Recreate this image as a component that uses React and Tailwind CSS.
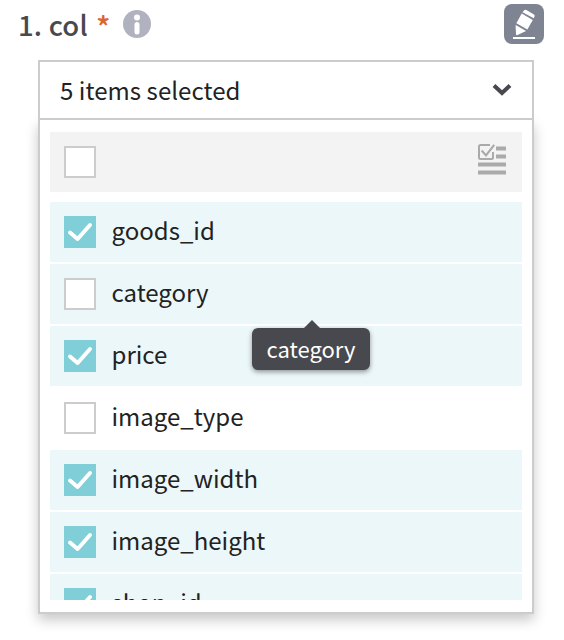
const columns = [
  { name: "goods_id", checked: true, tinted: true },
  { name: "category", checked: false, tinted: true },
  { name: "price", checked: true, tinted: true },
  { name: "image_type", checked: false, tinted: false },
  { name: "image_width", checked: true, tinted: true },
  { name: "image_height", checked: true, tinted: true },
  { name: "shop_id", checked: true, tinted: true },
];

function Checkbox({ checked }) {
  if (!checked) {
    return <span className="size-8 shrink-0 border-2 border-[#cccccc] bg-white" />;
  }
  return (
    <span className="size-8 shrink-0 bg-[#7fced8]">
      <svg viewBox="0 0 32 32" className="size-8" fill="none" stroke="white" strokeWidth="4" strokeLinecap="round" strokeLinejoin="round">
        <path d="M6 16.500 13.600 23 26 9" />
      </svg>
    </span>
  );
}

function InfoIcon() {
  return (
    <svg viewBox="0 0 28 28" className="ml-[13px] mt-[10px] size-7">
      <circle cx="14" cy="14" r="14" fill="#b0b2bf" />
      <circle cx="14" cy="7.4" r="3" fill="white" />
      <rect x="11.5" y="12" width="5" height="12.4" rx="2.5" fill="white" />
    </svg>
  );
}

function EditIcon() {
  return (
    <svg viewBox="0 0 40 40" className="size-10">
      <g fill="white">
        <path d="M20 6.6Q20.900 5.400 22.300 6.100L30 10.500Q31.100 11.300 30.500 12.600L29.800 14.300 18.500 8.200Z" />
        <path d="M17.700 9.500 28.800 15.900 23.400 25.400 12.400 19.200Z" />
        <path d="M11.600 20.900 22.100 27 13 31.200Q12.200 31.300 12 30.300Z" />
        <rect x="9" y="33" width="22" height="2" />
      </g>
    </svg>
  );
}

function ChecklistIcon() {
  return (
    <svg viewBox="0 0 28 32" className="h-8 w-7" fill="none" stroke="#aaaaaa">
      <path d="M12 2H2.500Q1 2 1 3.500V14.500Q1 16 2.500 16H13.500Q15 16 15 14.500V9" strokeWidth="2" />
      <path d="M3.600 7.600 8 12.400 16.200 1.800" strokeWidth="2.2" />
      <path d="M18 5.500H28M18 13.500H28M0 21.500H28M0 29.500H28" strokeWidth="4" />
    </svg>
  );
}

export default function App() {
  return (
    <div className="h-[640px] w-[564px] overflow-hidden bg-white font-['Noto_Sans_CJK_SC',sans-serif] text-[24px] text-[#222222]">
      <header className="flex h-[60px] items-start pl-[18px] pr-5">
        <span className="mt-[6px] w-[71px] whitespace-nowrap text-[27.5px] leading-9 font-medium tracking-[0.2px] text-[#48494e]">1. col</span>
        <span className="ml-[7px] mt-[8px] w-[14px] text-[30px] leading-9 font-medium text-[#dc6430]">*</span>
        <InfoIcon />
        <button className="ml-auto mt-1 size-10 rounded-lg bg-[#7f8492]">
          <EditIcon />
        </button>
      </header>

      <main className="ml-[38px] w-[496px]">
        <div className="relative flex h-[60px] items-center justify-between border-2 border-[#cccccc] bg-white pl-5 pr-5">
          <span className="leading-9 tracking-[0.06px]">5 items selected</span>
          <svg viewBox="0 0 20 14" className="w-5" fill="none" stroke="#48494e" strokeWidth="4">
            <path d="M2 2.500 10 10 18 2.500" />
          </svg>
        </div>

        <div className="h-[494px] border-2 border-t-0 border-[#cccccc] bg-white px-[10px] pt-3 shadow-[0_6px_12px_rgba(0,0,0,0.22)]">
          <div className="flex h-[60px] items-center justify-between bg-[#f3f3f3] pl-[14px] pr-4">
            <Checkbox checked={false} />
            <span className="-mt-[6px]">
              <ChecklistIcon />
            </span>
          </div>
          <div className="mt-[10px] flex h-[398px] flex-col gap-[2px] overflow-hidden">
            {columns.map(({ name, checked, tinted }) => (
              <div key={name} className={`relative flex h-[60px] shrink-0 items-center pl-[14px] ${tinted ? "bg-[#ebf7f9]" : "bg-white"}`}>
                <Checkbox checked={checked} />
                <span className="mb-1 ml-[15.5px] leading-9">{name}</span>
                {name === "category" && (
                  <div className="absolute left-[202px] top-[64px] z-10 flex h-[42px] w-[118px] items-center justify-center rounded-md bg-[#48494e] text-[22px] text-white shadow-[0_2px_5px_rgba(0,0,0,0.4)]">
                    <svg viewBox="0 0 16 8" className="absolute -top-2 left-[52px] h-2 w-4">
                      <path d="M0 8 8 0 16 8Z" fill="#48494e" />
                    </svg>
                    <span className="mb-[2px] leading-8">category</span>
                  </div>
                )}
              </div>
            ))}
          </div>
        </div>
      </main>
    </div>
  );
}
